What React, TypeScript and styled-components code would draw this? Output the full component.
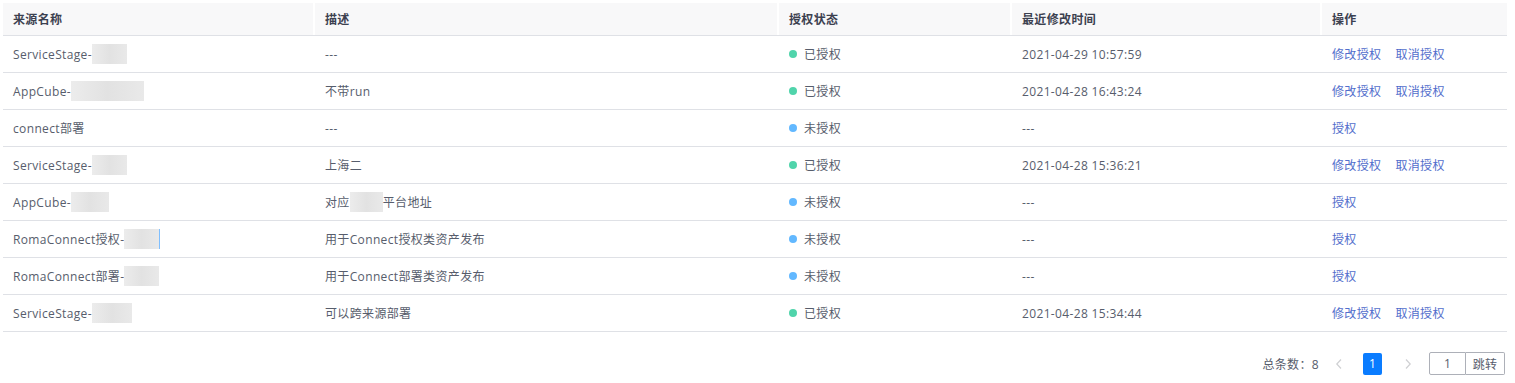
import React from "react";
import styled, { createGlobalStyle } from "styled-components";

const GlobalStyle = createGlobalStyle`
  html, body { margin: 0; padding: 0; background: #ffffff; }
  body {
    font-family: "Open Sans", "Noto Sans CJK SC", sans-serif;
    font-size: 12px;
    letter-spacing: 0.35px;
    color: #575d6c;
  }
`;

const Page = styled.div`
  padding: 3px 8px 0 3px;
  width: 1504px;
`;

const COLS = "312px 464px 233px 310px 185px";

const HeaderRow = styled.div`
  display: grid;
  grid-template-columns: ${COLS};
  height: 32px;
  background: #f8f8f9;
  border-bottom: 1px solid #dfe1e6;
`;

const HeaderCell = styled.div<{ $first?: boolean }>`
  display: flex;
  align-items: center;
  padding-left: 10px;
  color: #3c4150;
  font-weight: 700;
  border-left: ${(p) => (p.$first ? "none" : "2px solid #ffffff")};
  margin-left: ${(p) => (p.$first ? "0" : "-2px")};
`;

const Row = styled.div`
  display: grid;
  grid-template-columns: ${COLS};
  height: 36px;
  border-bottom: 1px solid #dfe1e6;
`;

const Cell = styled.div`
  display: flex;
  align-items: center;
  padding-left: 10px;
  white-space: nowrap;
  color: #575d6c;
`;

const Blur = styled.span<{ $w: number; $edge?: boolean }>`
  display: inline-block;
  width: ${(p) => p.$w}px;
  height: 20px;
  background: linear-gradient(90deg, #ececec 0%, #e2e2e2 50%, #e9e9e9 100%);
  border-right: ${(p) => (p.$edge ? "1px solid #7fbfff" : "none")};
`;

const Dot = styled.span<{ $ok: boolean }>`
  width: 8px;
  height: 8px;
  border-radius: 50%;
  background: ${(p) => (p.$ok ? "#50d4ab" : "#62b8ff")};
  margin-right: 7px;
`;

const Actions = styled(Cell)`
  gap: 14px;
`;

const Link = styled.a`
  color: #526ecc;
  cursor: pointer;
  text-decoration: none;
`;

const Pager = styled.div`
  display: flex;
  justify-content: flex-end;
  align-items: center;
  height: 23px;
  margin-top: 20px;
  padding-right: 2px;
`;

const Total = styled.span`
  color: #575d6c;
  margin-right: 10px;
`;

const Arrow = styled.span`
  display: flex;
  align-items: center;
  justify-content: center;
  width: 20px;
  color: #cfd0d3;
`;

const PageBtn = styled.span`
  display: flex;
  align-items: center;
  justify-content: center;
  width: 19px;
  height: 22px;
  background: #0a7cff;
  color: #ffffff;
  border-radius: 2px;
  margin: 0 16px 0 14px;
`;

const JumpGroup = styled.div`
  display: flex;
  margin-left: 11px;
  height: 23px;
`;

const JumpInput = styled.span`
  display: flex;
  align-items: center;
  justify-content: center;
  width: 35px;
  border: 1px solid #adb0b8;
  border-radius: 2px 0 0 2px;
  color: #575d6c;
`;

const JumpBtn = styled.span`
  display: flex;
  align-items: center;
  justify-content: center;
  width: 38px;
  border: 1px solid #adb0b8;
  border-left: none;
  border-radius: 0 2px 2px 0;
  color: #575d6c;
`;

type RowData = {
  prefix: string;
  blur: number;
  edge?: boolean;
  desc: React.ReactNode;
  ok: boolean;
  time: string;
};

const rows: RowData[] = [
  { prefix: "ServiceStage-", blur: 35, desc: "---", ok: true, time: "2021-04-29 10:57:59" },
  { prefix: "AppCube-", blur: 73, desc: "不带run", ok: true, time: "2021-04-28 16:43:24" },
  { prefix: "connect部署", blur: 0, desc: "---", ok: false, time: "---" },
  { prefix: "ServiceStage-", blur: 35, desc: "上海二", ok: true, time: "2021-04-28 15:36:21" },
  {
    prefix: "AppCube-",
    blur: 38,
    desc: (
      <>
        对应<Blur $w={33} />平台地址
      </>
    ),
    ok: false,
    time: "---",
  },
  { prefix: "RomaConnect授权-", blur: 35, edge: true, desc: "用于Connect授权类资产发布", ok: false, time: "---" },
  { prefix: "RomaConnect部署-", blur: 35, desc: "用于Connect部署类资产发布", ok: false, time: "---" },
  { prefix: "ServiceStage-", blur: 40, desc: "可以跨来源部署", ok: true, time: "2021-04-28 15:34:44" },
];

const ChevronLeft = () => (
  <svg width="8" height="12" viewBox="0 0 8 12" fill="none">
    <path d="M6 1.5L1.8 6L6 10.5" stroke="#cfd0d3" strokeWidth="1.2" />
  </svg>
);
const ChevronRight = () => (
  <svg width="8" height="12" viewBox="0 0 8 12" fill="none">
    <path d="M2 1.5L6.2 6L2 10.5" stroke="#cfd0d3" strokeWidth="1.2" />
  </svg>
);

export default function App() {
  return (
    <>
      <GlobalStyle />
      <Page>
        <HeaderRow>
          <HeaderCell $first>来源名称</HeaderCell>
          <HeaderCell>描述</HeaderCell>
          <HeaderCell>授权状态</HeaderCell>
          <HeaderCell>最近修改时间</HeaderCell>
          <HeaderCell>操作</HeaderCell>
        </HeaderRow>
        {rows.map((r, i) => (
          <Row key={i}>
            <Cell>
              {r.prefix}
              {r.blur > 0 && <Blur $w={r.blur} $edge={r.edge} />}
            </Cell>
            <Cell>{r.desc}</Cell>
            <Cell>
              <Dot $ok={r.ok} />
              {r.ok ? "已授权" : "未授权"}
            </Cell>
            <Cell>{r.time}</Cell>
            <Actions>
              {r.ok ? (
                <>
                  <Link>修改授权</Link>
                  <Link>取消授权</Link>
                </>
              ) : (
                <Link>授权</Link>
              )}
            </Actions>
          </Row>
        ))}
        <Pager>
          <Total>总条数：8</Total>
          <Arrow>
            <ChevronLeft />
          </Arrow>
          <PageBtn>1</PageBtn>
          <Arrow>
            <ChevronRight />
          </Arrow>
          <JumpGroup>
            <JumpInput>1</JumpInput>
            <JumpBtn>跳转</JumpBtn>
          </JumpGroup>
        </Pager>
      </Page>
    </>
  );
}
